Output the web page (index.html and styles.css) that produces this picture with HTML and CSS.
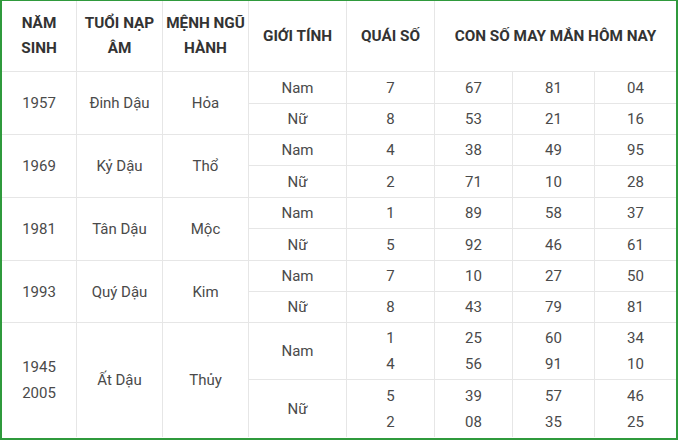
FILE: index.html
```html
<!DOCTYPE html>
<html lang="vi">
<head>
<meta charset="utf-8">
<title>Con số may mắn tuổi Dậu</title>
<link rel="stylesheet" href="styles.css">
</head>
<body>
<div class="frame">
<table class="lucky">
  <colgroup>
    <col class="c1"><col class="c2"><col class="c3"><col class="c4">
    <col class="c5"><col class="c6"><col class="c7"><col class="c8">
  </colgroup>
  <thead>
    <tr class="head">
      <th>NĂM<br>SINH</th>
      <th>TUỔI NẠP<br>ÂM</th>
      <th>MỆNH NGŨ<br>HÀNH</th>
      <th>GIỚI TÍNH</th>
      <th>QUÁI SỐ</th>
      <th colspan="3" class="last">CON SỐ MAY MẮN HÔM NAY</th>
    </tr>
  </thead>
  <tbody>
    <tr class="r32">
      <td rowspan="2">1957</td><td rowspan="2">Đinh Dậu</td><td rowspan="2">Hỏa</td>
      <td>Nam</td><td>7</td><td>67</td><td>81</td><td class="last">04</td>
    </tr>
    <tr class="r31">
      <td>Nữ</td><td>8</td><td>53</td><td>21</td><td class="last">16</td>
    </tr>
    <tr class="r31">
      <td rowspan="2">1969</td><td rowspan="2">Kỷ Dậu</td><td rowspan="2">Thổ</td>
      <td>Nam</td><td>4</td><td>38</td><td>49</td><td class="last">95</td>
    </tr>
    <tr class="r32">
      <td>Nữ</td><td>2</td><td>71</td><td>10</td><td class="last">28</td>
    </tr>
    <tr class="r31">
      <td rowspan="2">1981</td><td rowspan="2">Tân Dậu</td><td rowspan="2">Mộc</td>
      <td>Nam</td><td>1</td><td>89</td><td>58</td><td class="last">37</td>
    </tr>
    <tr class="r32">
      <td>Nữ</td><td>5</td><td>92</td><td>46</td><td class="last">61</td>
    </tr>
    <tr class="r31">
      <td rowspan="2">1993</td><td rowspan="2">Quý Dậu</td><td rowspan="2">Kim</td>
      <td>Nam</td><td>7</td><td>10</td><td>27</td><td class="last">50</td>
    </tr>
    <tr class="r31">
      <td>Nữ</td><td>8</td><td>43</td><td>79</td><td class="last">81</td>
    </tr>
    <tr class="r57">
      <td rowspan="2" class="bottom">1945<br>2005</td><td rowspan="2" class="bottom">Ất Dậu</td><td rowspan="2" class="bottom">Thủy</td>
      <td>Nam</td><td>1<br>4</td><td>25<br>56</td><td>60<br>91</td><td class="last">34<br>10</td>
    </tr>
    <tr class="r57">
      <td class="bottom">Nữ</td><td class="bottom">5<br>2</td><td class="bottom">39<br>08</td><td class="bottom">57<br>35</td><td class="last bottom">46<br>25</td>
    </tr>
  </tbody>
</table>
</div>
</body>
</html>
```
FILE: styles.css
```css
html, body {
  margin: 0;
  padding: 0;
  background: #ffffff;
}

.frame {
  box-sizing: border-box;
  width: 678px;
  height: 440px;
  border: 2px solid #2f9a3c;
  border-top-width: 1px;
  overflow: hidden;
}

.lucky {
  table-layout: fixed;
  width: 674px;
  border-collapse: separate;
  border-spacing: 0;
  font-family: Roboto, "Noto Sans", sans-serif;
  font-size: 15px;
  color: #4a4a4a;
}

.c1 { width: 75px; }
.c2 { width: 86px; }
.c3 { width: 86px; }
.c4 { width: 98px; }
.c5 { width: 88px; }
.c6 { width: 78px; }
.c7 { width: 82px; }
.c8 { width: 81px; }

.lucky th,
.lucky td {
  box-sizing: border-box;
  padding: 0;
  text-align: center;
  vertical-align: middle;
  border-right: 1px solid #e6e6e6;
  border-bottom: 1px solid #e6e6e6;
  line-height: 26px;
}

.lucky th {
  font-weight: 700;
  color: #333333;
  line-height: 25px;
  font-size: 15.3px;
}

.lucky .last { border-right: none; }
.lucky .bottom { border-bottom: none; }

.head { height: 71px; }
.r31 { height: 31px; }
.r32 { height: 32px; }
.r57 { height: 57px; }
```
